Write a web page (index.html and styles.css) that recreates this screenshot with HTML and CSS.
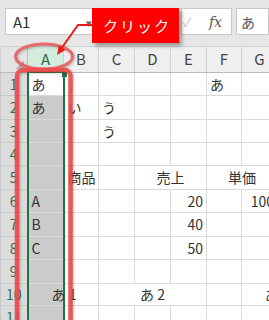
FILE: index.html
```html
<!DOCTYPE html>
<html lang="ja">
  <head>
    <meta charset="UTF-8" />
    <meta name="viewport" content="width=device-width, initial-scale=1.0" />
    <title>列の選択</title>

    <link rel="stylesheet" href="styles.css">
  </head>
  <body>
    <div class="bar">
      <div class="namebox"><span>A1</span><span class="drop">▾</span></div>
      <div class="btns"><span class="check">✓</span><span class="fx">fx</span></div>
      <div class="formula">あ</div>
    </div>

    <table class="sheet">
      <colgroup>
        <col class="w27"><col class="w36"><col class="w35"><col class="w36"><col class="w36">
        <col class="w36"><col class="w35"><col class="w36"><col class="w36">
      </colgroup>
      <tr class="head">
        <th class="corner"></th>
        <th class="sel">A</th><th>B</th><th>C</th><th>D</th><th>E</th><th>F</th><th>G</th><th>H</th>
      </tr>
      <tr class="r23">
        <th class="row">1</th>
        <td class="sel active">あ</td><td></td><td></td><td></td><td></td><td>あ</td><td></td><td></td>
      </tr>
      <tr class="r24">
        <th class="row">2</th>
        <td class="sel">あ</td><td>い</td><td>う</td><td></td><td></td><td></td><td></td><td></td>
      </tr>
      <tr class="r23">
        <th class="row">3</th>
        <td class="sel"></td><td></td><td>う</td><td></td><td></td><td></td><td></td><td></td>
      </tr>
      <tr class="r23">
        <th class="row">4</th>
        <td class="sel"></td><td></td><td></td><td></td><td></td><td></td><td></td><td></td>
      </tr>
      <tr class="r24">
        <th class="row">5</th>
        <td class="sel"></td><td class="mid">商品</td><td></td>
        <td class="mid" colspan="2">売上</td><td class="mid" colspan="2">単価</td><td></td>
      </tr>
      <tr class="r23">
        <th class="row">6</th>
        <td class="sel">A</td><td></td><td></td><td></td><td class="num">20</td><td></td><td class="num">100</td><td></td>
      </tr>
      <tr class="r24">
        <th class="row">7</th>
        <td class="sel">B</td><td></td><td></td><td></td><td class="num">40</td><td></td><td></td><td></td>
      </tr>
      <tr class="r23">
        <th class="row">8</th>
        <td class="sel">C</td><td></td><td></td><td></td><td class="num">50</td><td></td><td></td><td></td>
      </tr>
      <tr class="r24">
        <th class="row">9</th>
        <td class="sel"></td><td></td><td></td><td></td><td></td><td></td><td></td><td></td>
      </tr>
      <tr class="r22">
        <th class="row">10</th>
        <td class="sel"><div class="spill">あ 1</div></td><td></td>
        <td class="mid" colspan="3">あ 2</td><td></td><td class="mid" colspan="2">あ 3</td>
      </tr>
      <tr class="r24">
        <th class="row">11</th>
        <td class="sel"></td><td></td><td></td><td></td><td></td><td></td><td></td><td></td>
      </tr>
    </table>

    <svg class="marks" width="269" height="320" viewBox="0 0 269 320">
      <g class="ring">
        <ellipse cx="44" cy="56.5" rx="28.5" ry="12.5" />
        <rect x="17" y="70" width="53.5" height="300" rx="6" />
      </g>
      <g class="arrow">
        <polyline points="93,25 78,25 61,49" />
        <polygon points="57,55 58.9,45.3 65.4,49.9" />
      </g>
    </svg>
    <div class="callout">クリック</div>
  </body>
</html>
```

FILE: styles.css
```css
body {
  margin: 0;
  width: 269px;
  height: 320px;
  overflow: hidden;
  position: relative;
  background: #fff;
  color: #333;
  font-family: "Noto Sans CJK JP", "Liberation Sans", sans-serif;
}

/* name box + formula bar */
.bar {
  height: 46px;
  box-sizing: border-box;
  padding-top: 8px;
  background: #e6e6e6;
  display: flex;
  align-items: flex-start;
}

.namebox,
.btns,
.formula {
  height: 27px;
  box-sizing: border-box;
  background: #fff;
  border: 1px solid #c9c9c9;
  display: flex;
  align-items: center;
}

.namebox {
  margin-left: 5px;
  width: 91px;
  padding: 0 3px 0 7px;
  justify-content: space-between;
  font-size: 15px;
  color: #333;
}

.drop {
  font-size: 11px;
  color: #666;
}

.btns {
  margin-left: 85px;
  width: 51px;
  padding: 0 9px 0 1px;
  justify-content: space-between;
}

.check {
  font-size: 12px;
  color: #c4c4c4;
}

.fx {
  font-family: "DejaVu Serif", "Liberation Serif", serif;
  font-style: italic;
  font-size: 14px;
  color: #555;
}

.formula {
  margin-left: 4px;
  flex: 1;
  padding-left: 4px;
  font-size: 14px;
  color: #555;
}

/* grid */
.sheet {
  border-collapse: collapse;
  table-layout: fixed;
  width: 313px;
  font-size: 14px;
}

.w27 { width: 27px; }
.w35 { width: 35px; }
.w36 { width: 36px; }

.r22 { height: 22px; }
.r23 { height: 23px; }
.r24 { height: 24px; }

.sheet th,
.sheet td {
  border: 1px solid #dadada;
  padding: 0 3px;
  line-height: 16px;
  white-space: nowrap;
  overflow: visible;
  font-weight: normal;
  text-align: left;
}

.head th {
  height: 24px;
  background: #efefef;
  border-color: #d2d2d2;
  border-bottom-color: #bcbcbc;
  color: #444;
  font-size: 15px;
  text-align: center;
}

.head th.corner {
  background: linear-gradient(135deg, transparent 50%, #b8b8b8 50%) no-repeat right 3px bottom 3px / 8px 8px, #e4e4e4;
  border-right-color: #bcbcbc;
}

.head th.sel {
  background: #d3ecdd;
  color: #1f6b47;
  border-bottom: 2px solid #217346;
}

.sheet th.row {
  background: #dcdcdc;
  border-color: #c8c8c8;
  border-right-color: #bcbcbc;
  color: #2a6f57;
  text-align: center;
  padding: 0;
}

.sheet td.sel {
  background: #cbcbcb;
  border-left: 2px solid #217346;
  border-right: 2px solid #217346;
}

.sheet td.active {
  background: #fff;
  position: relative;
}

.sheet td.active::after {
  content: "";
  position: absolute;
  top: -1px;
  right: -4px;
  width: 5px;
  height: 5px;
  background: #217346;
}

.sheet td.mid {
  text-align: center;
}

.sheet td.num {
  text-align: right;
}

.spill {
  width: 71px;
  margin-left: -3px;
  text-align: center;
}

/* annotation */
.marks {
  position: absolute;
  top: 0;
  left: 0;
  pointer-events: none;
}

.ring {
  fill: none;
  stroke: rgba(240, 72, 72, 0.88);
  filter: drop-shadow(1px 1px 1px rgba(0, 0, 0, 0.3));
}

.ring ellipse {
  stroke-width: 3;
  stroke: rgba(236, 90, 90, 0.85);
}

.ring rect {
  stroke-width: 4.5;
}

.arrow polyline {
  fill: none;
  stroke: #e81c1c;
  stroke-width: 2;
}

.arrow polygon {
  fill: #e81c1c;
}

.callout {
  position: absolute;
  left: 92px;
  top: 8px;
  width: 87px;
  height: 35px;
  background: #ff0000;
  color: #fff;
  font-size: 15px;
  letter-spacing: 2px;
  display: flex;
  align-items: center;
  justify-content: center;
  padding-left: 3px;
  box-sizing: border-box;
  box-shadow: 3px 3px 4px rgba(0, 0, 0, 0.35);
}
```
